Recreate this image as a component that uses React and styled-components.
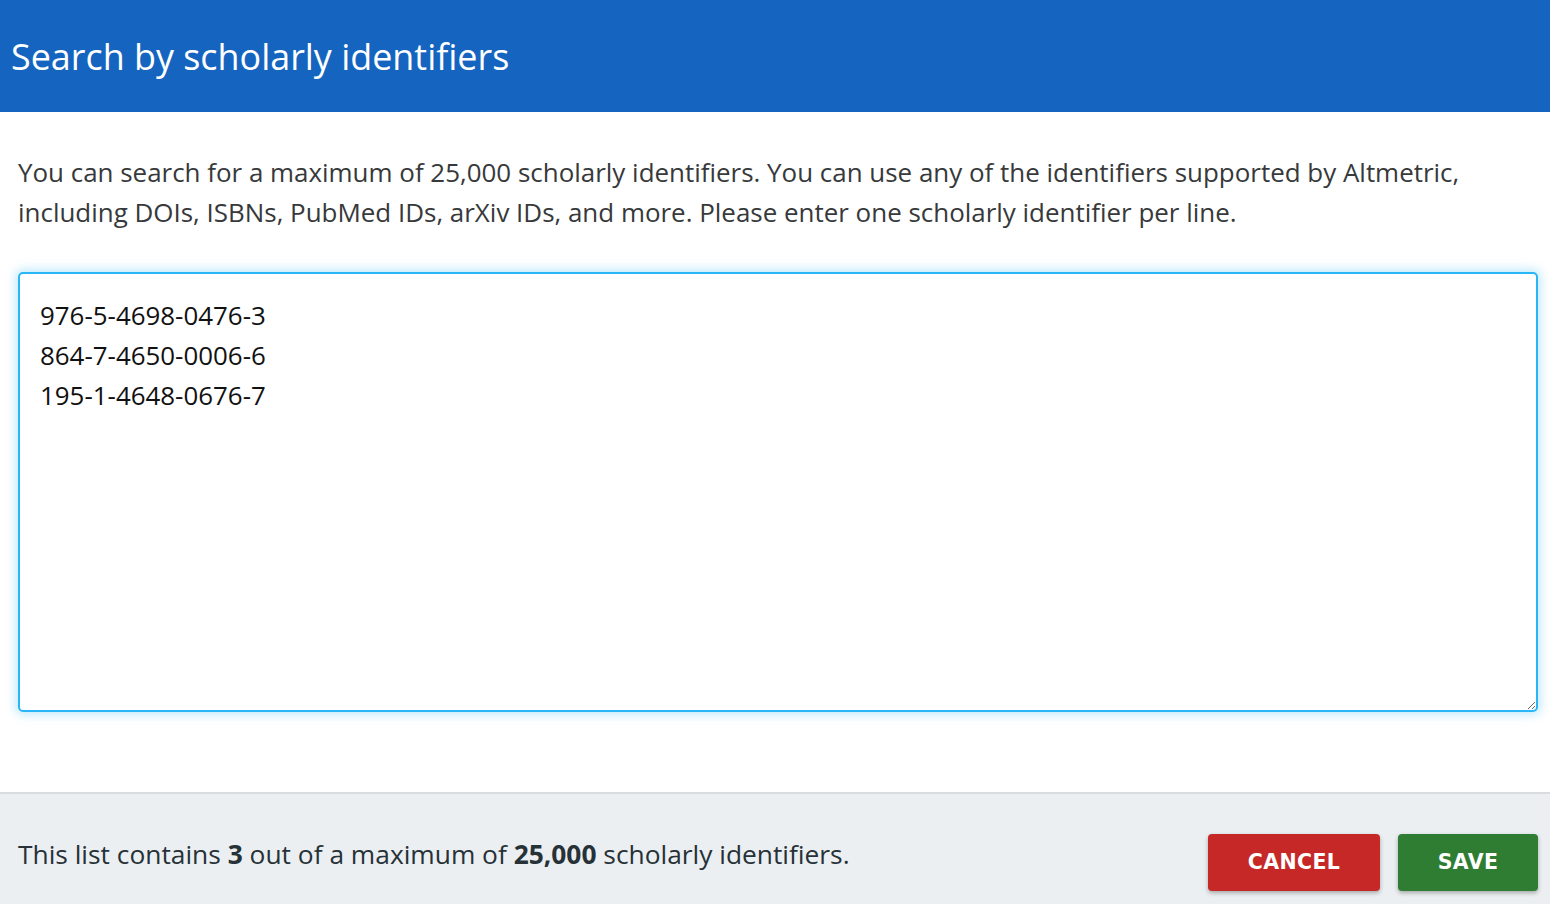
import React, { useEffect, useRef } from "react";
import styled, { createGlobalStyle } from "styled-components";

const Global = createGlobalStyle`
  html, body { margin: 0; padding: 0; background: #fff; }
  body { font-family: "Open Sans", "Noto Sans", sans-serif; }
  * { box-sizing: border-box; }
`;

const Dialog = styled.div`
  width: 1550px;
  height: 904px;
  display: flex;
  flex-direction: column;
  background: #fff;
  overflow: hidden;
`;

const Header = styled.header`
  height: 112px;
  flex: none;
  background: #1565c0;
  display: flex;
  align-items: center;
  padding: 0 11px;
`;

const Title = styled.h1`
  margin: 0;
  font-family: "Open Sans", sans-serif;
  font-weight: 400;
  font-size: 35.9px;
  color: #fff;
`;

const Body = styled.main`
  flex: 1;
  padding: 0 12px 0 18px;
  display: flex;
  flex-direction: column;
`;

const Intro = styled.p`
  margin: 40px 0 0 0;
  font-size: 25.95px;
  line-height: 40px;
  color: #37393b;
`;

const Area = styled.textarea`
  margin-top: 40px;
  width: 1520px;
  height: 440px;
  border: 2px solid #29b6f6;
  border-radius: 5px;
  box-shadow: 0 0 10px 3px rgba(41, 182, 246, 0.28);
  padding: 21px 20px;
  font-family: "Open Sans", sans-serif;
  font-size: 25.9px;
  line-height: 40px;
  color: #111;
  caret-color: #000;
  outline: none;
  resize: both;
`;

const Footer = styled.footer`
  height: 112px;
  flex: none;
  background: #eceff1;
  border-top: 2px solid #d8dcdf;
  display: flex;
  align-items: center;
  padding: 26px 12px 0 18px;
  gap: 18px;
`;

const Count = styled.p`
  margin: 0;
  flex: 1;
  font-size: 26.35px;
  color: #263238;
  transform: translateY(-8px);
  b { font-weight: 700; }
`;

const Button = styled.button`
  height: 57px;
  width: ${(p) => p.$w}px;
  border: none;
  border-radius: 4px;
  background: ${(p) => p.$bg};
  color: #fff;
  font-family: "DejaVu Sans", "Open Sans", sans-serif;
  font-weight: 700;
  font-size: 20.5px;
  letter-spacing: 0.4px;
  box-shadow: 0 2px 4px rgba(0, 0, 0, 0.3);
  cursor: pointer;
`;

export default function App() {
  const ref = useRef(null);
  useEffect(() => {
    if (ref.current) {
      ref.current.focus();
      ref.current.setSelectionRange(36, 36);
    }
  }, []);
  return (
    <>
      <Global />
      <Dialog>
        <Header>
          <Title>Search by scholarly identifiers</Title>
        </Header>
        <Body>
          <Intro>
            You can search for a maximum of 25,000 scholarly identifiers. You can use any of the identifiers supported by Altmetric,
            including DOIs, ISBNs, PubMed IDs, arXiv IDs, and more. Please enter one scholarly identifier per line.
          </Intro>
          <Area
            ref={ref}
            defaultValue={"976-5-4698-0476-3\n864-7-4650-0006-6\n195-1-4648-0676-7"}
            spellCheck={false}
          />
        </Body>
        <Footer>
          <Count>
            This list contains <b>3</b> out of a maximum of <b>25,000</b> scholarly identifiers.
          </Count>
          <Button $bg="#c62828" $w={172}>CANCEL</Button>
          <Button $bg="#2e7d32" $w={140}>SAVE</Button>
        </Footer>
      </Dialog>
    </>
  );
}
